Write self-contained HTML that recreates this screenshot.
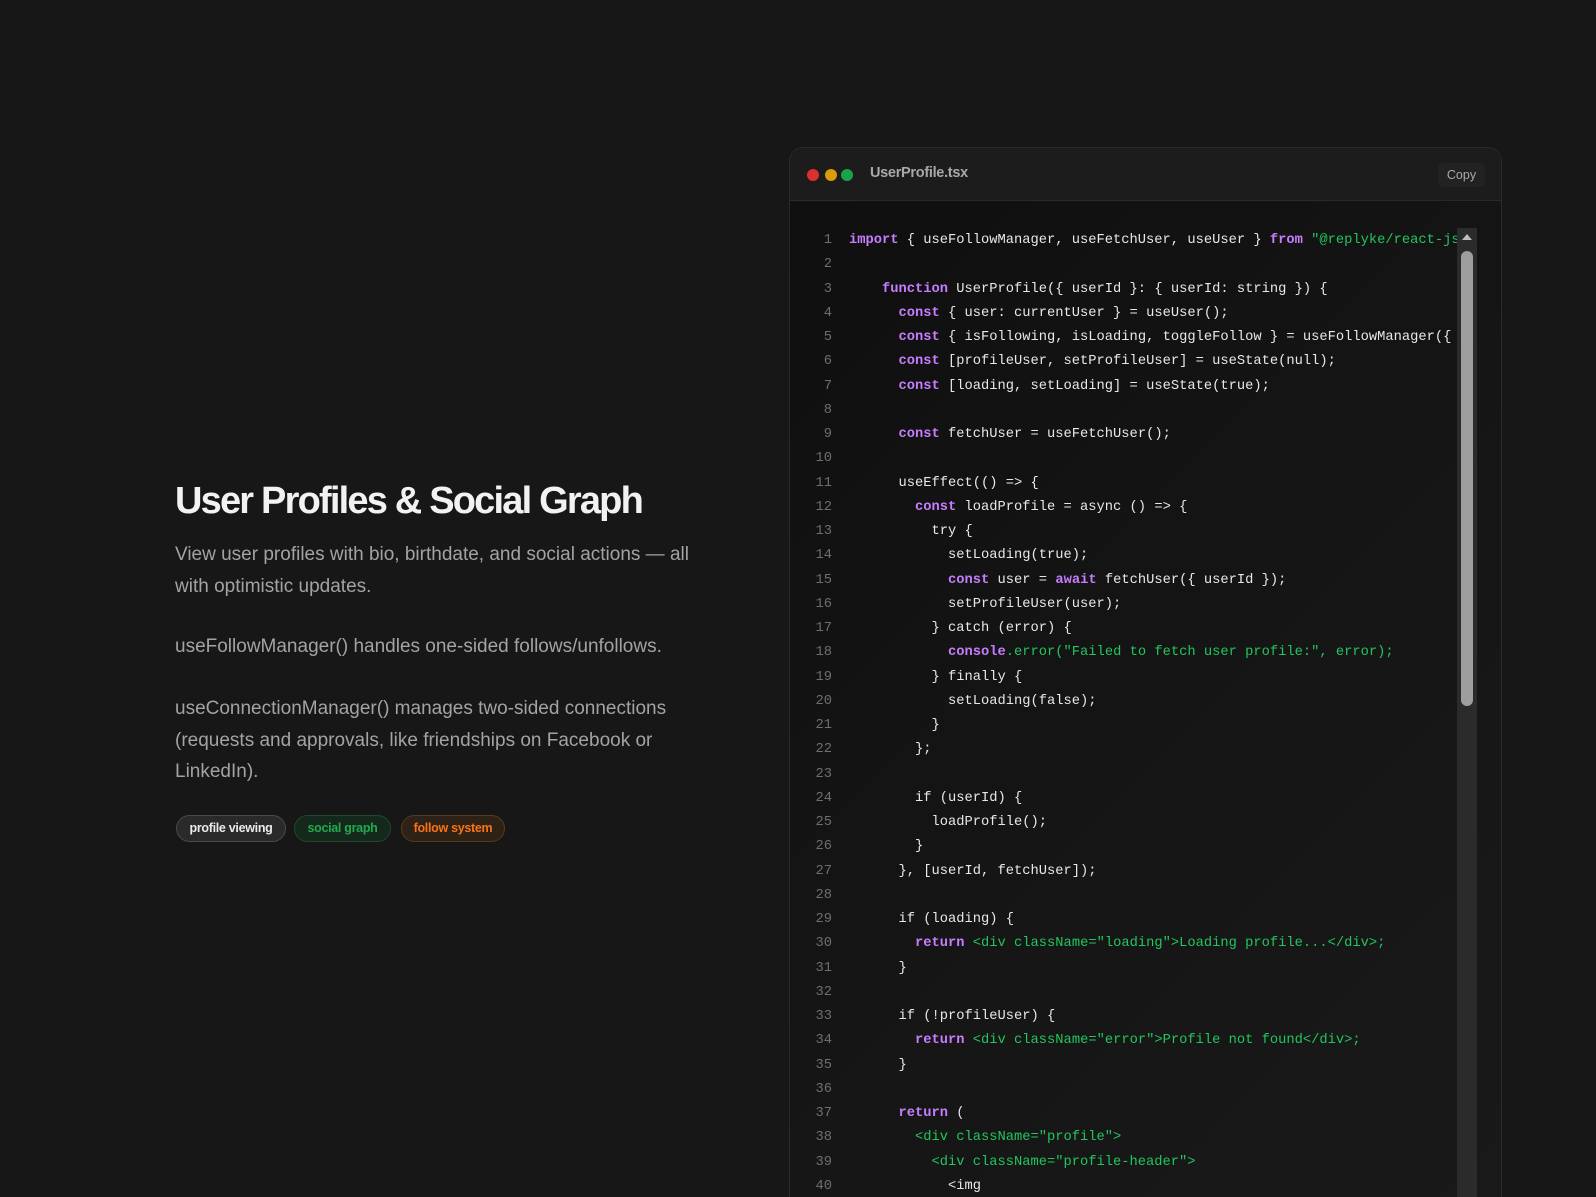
<!DOCTYPE html>
<html><head><meta charset="utf-8">
<style>
*{margin:0;padding:0;box-sizing:border-box}
html,body{width:1596px;height:1197px;overflow:hidden;background:#171717;font-family:"Liberation Sans",sans-serif}
.title{position:absolute;left:175px;top:480px;font-size:38px;font-weight:bold;color:#f2f2f2;letter-spacing:-1.8px;white-space:nowrap}
.p{position:absolute;left:175px;color:#a3a3a3;font-size:19px;letter-spacing:0;line-height:31.5px;white-space:nowrap}
.tag{position:absolute;top:815px;height:27px;border-radius:14px;font-size:12.5px;font-weight:bold;line-height:25px;text-align:center;letter-spacing:-0.3px}
.card{position:absolute;left:789px;top:147px;width:713px;height:1050px;border:1px solid #2a2a2a;border-bottom:none;border-radius:14px 14px 0 0;background:#121212;overflow:hidden}
.hdr{height:53px;background:#1c1c1c;border-bottom:1px solid #2a2a2a;position:relative}
.dot{position:absolute;top:21px;width:12px;height:12px;border-radius:50%}
.fn{position:absolute;left:80px;top:17px;font-size:14.5px;color:#a8a8a8;font-weight:bold;letter-spacing:-0.3px}
.copy{position:absolute;left:648px;top:15px;width:47px;height:24px;background:#222;border-radius:5px;color:#a8a8a8;font-size:12.5px;line-height:24px;text-align:center}
.code{position:absolute;left:0;top:54px;width:711px;height:996px;overflow:hidden;background:linear-gradient(135deg,#0f0f0f 0%,#161616 60%,#191919 100%)}
.nums{position:absolute;left:0;top:27px;width:42px;text-align:right;font-family:"Liberation Mono",monospace;font-size:13.75px;line-height:24.25px;color:#6e6e6e;white-space:pre}
.src{position:absolute;left:59px;top:27px;width:608px;overflow:hidden;font-family:"Liberation Mono",monospace;font-size:13.75px;line-height:24.25px;color:#e8e8e8;white-space:pre}
.k{color:#c77dff;font-weight:bold}
.s{color:#22c55e}
.track{position:absolute;left:667px;top:26px;width:20px;height:970px;background:#2b2b2b}
.thumb{position:absolute;left:4px;top:23px;width:12px;height:455px;background:#9e9e9e;border-radius:6px}
.arr{position:absolute;left:5px;top:6px;width:0;height:0;border-left:5px solid transparent;border-right:5px solid transparent;border-bottom:6px solid #bdbdbd}
</style></head><body>
<div class="title">User Profiles &amp; Social Graph</div>
<div class="p" style="top:539px">View user profiles with bio, birthdate, and social actions — all<br>with optimistic updates.</div>
<div class="p" style="top:631px">useFollowManager() handles one-sided follows/unfollows.</div>
<div class="p" style="top:693px">useConnectionManager() manages two-sided connections<br>(requests and approvals, like friendships on Facebook or<br>LinkedIn).</div>
<div class="tag" style="left:176px;width:110px;background:#2a2a2a;border:1px solid #4a4a4a;color:#eaeaea">profile viewing</div>
<div class="tag" style="left:294px;width:97px;background:#14291b;border:1px solid #1d4a2b;color:#22a94e">social graph</div>
<div class="tag" style="left:401px;width:104px;background:#2e2216;border:1px solid #5a3a17;color:#f97316">follow system</div>

<div class="card">
 <div class="hdr">
  <div class="dot" style="left:17px;background:#dc2f2f"></div>
  <div class="dot" style="left:35px;background:#d99a0b"></div>
  <div class="dot" style="left:51px;background:#16a34a"></div>
  <div class="fn">UserProfile.tsx</div>
  <div class="copy">Copy</div>
 </div>
 <div class="code">
<div class="nums">1
2
3
4
5
6
7
8
9
10
11
12
13
14
15
16
17
18
19
20
21
22
23
24
25
26
27
28
29
30
31
32
33
34
35
36
37
38
39
40</div>
<div class="src"><span class="k">import</span> { useFollowManager, useFetchUser, useUser } <span class="k">from</span> <span class="s">"@replyke/react-js";</span>

    <span class="k">function</span> UserProfile({ userId }: { userId: string }) {
      <span class="k">const</span> { user: currentUser } = useUser();
      <span class="k">const</span> { isFollowing, isLoading, toggleFollow } = useFollowManager({ userId });
      <span class="k">const</span> [profileUser, setProfileUser] = useState(null);
      <span class="k">const</span> [loading, setLoading] = useState(true);

      <span class="k">const</span> fetchUser = useFetchUser();

      useEffect(() =&gt; {
        <span class="k">const</span> loadProfile = async () =&gt; {
          try {
            setLoading(true);
            <span class="k">const</span> user = <span class="k">await</span> fetchUser({ userId });
            setProfileUser(user);
          } catch (error) {
            <span class="k">console</span><span class="s">.error("Failed to fetch user profile:", error);</span>
          } finally {
            setLoading(false);
          }
        };

        if (userId) {
          loadProfile();
        }
      }, [userId, fetchUser]);

      if (loading) {
        <span class="k">return</span> <span class="s">&lt;div className="loading"&gt;Loading profile...&lt;/div&gt;;</span>
      }

      if (!profileUser) {
        <span class="k">return</span> <span class="s">&lt;div className="error"&gt;Profile not found&lt;/div&gt;;</span>
      }

      <span class="k">return</span> (
        <span class="s">&lt;div className="profile"&gt;</span>
          <span class="s">&lt;div className="profile-header"&gt;</span>
            &lt;img</div>
<div class="track"><div class="arr"></div><div class="thumb"></div></div>
 </div>
</div>
</body></html>
